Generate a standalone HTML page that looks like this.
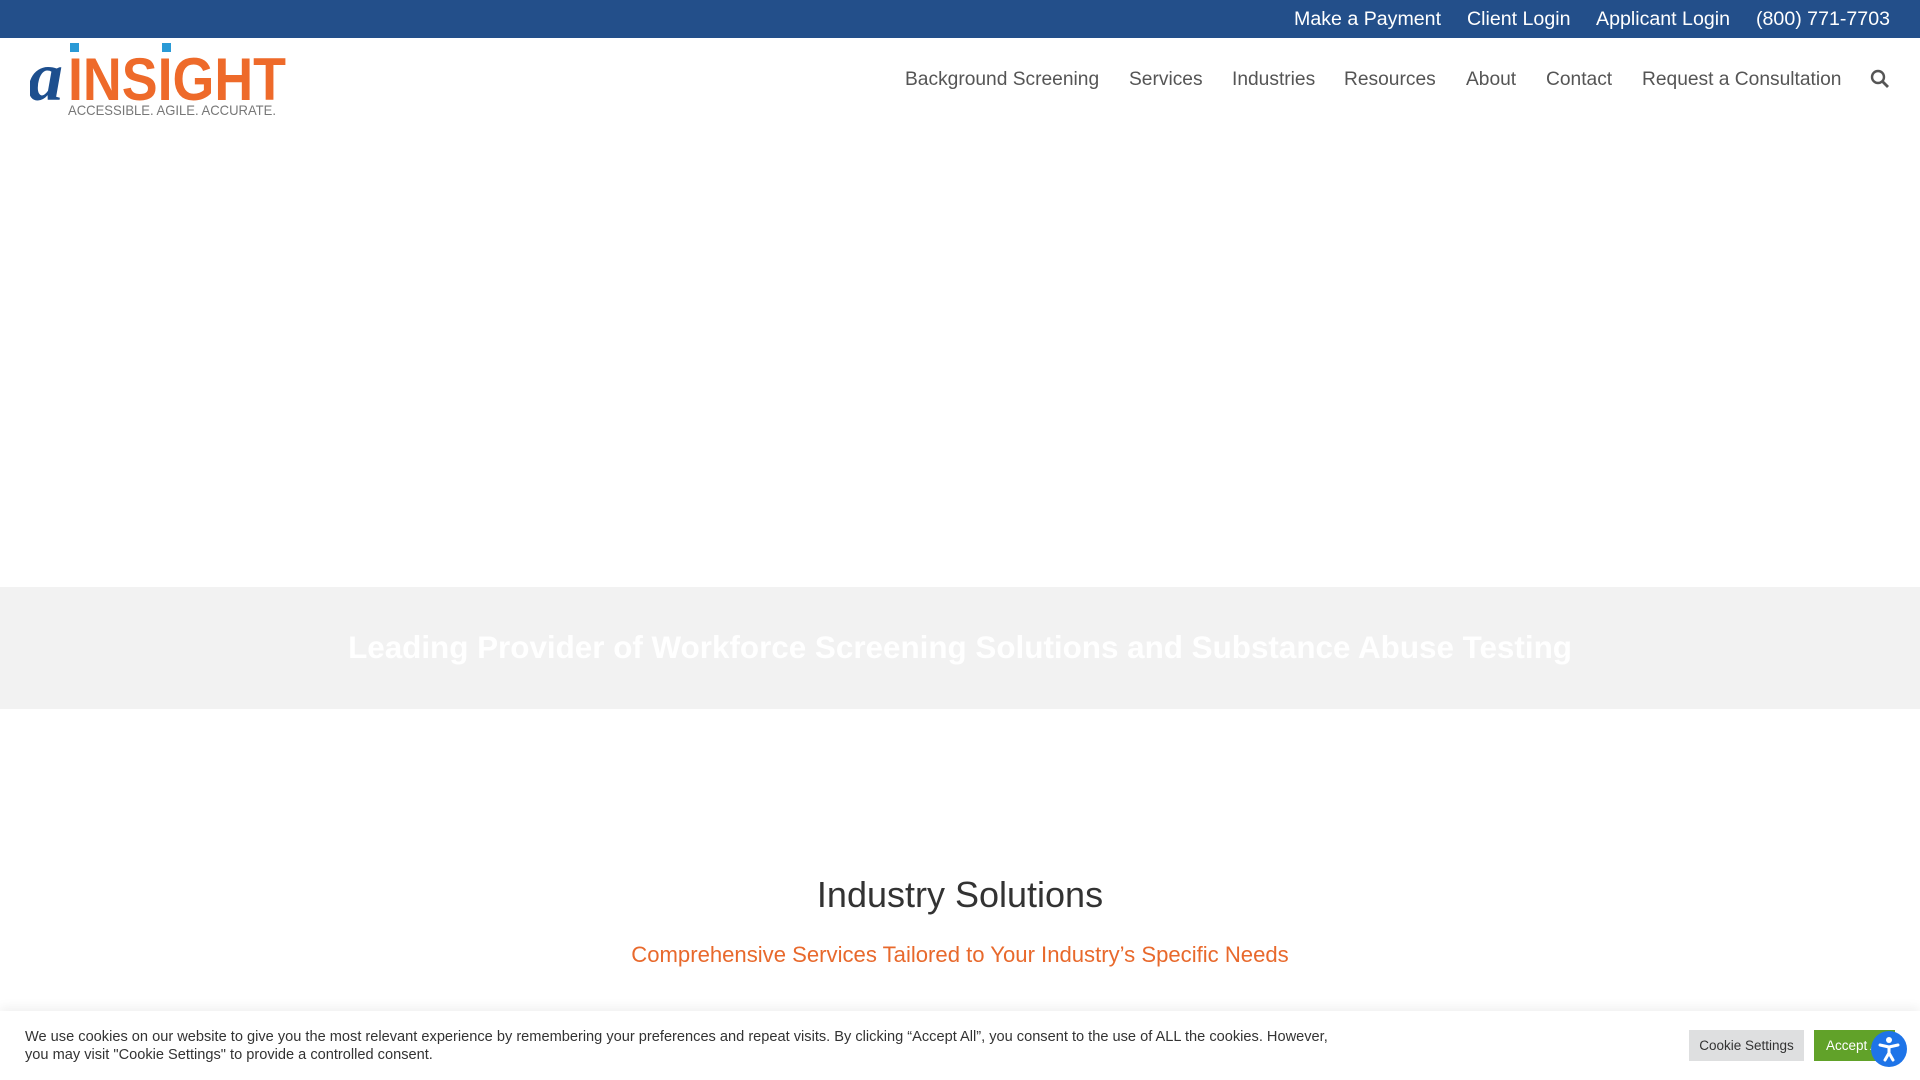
<!DOCTYPE html>
<html><head><meta charset="utf-8"><style>
*{margin:0;padding:0;box-sizing:border-box}
body{width:1920px;height:1080px;overflow:hidden;background:#fff;font-family:"Liberation Sans",Arial,sans-serif;position:relative}
.top{height:38px;background:#234f8a;position:relative}
.top span{position:absolute;top:8px;color:#fff;font-size:19.6px}
.logo{position:absolute;left:30px;top:42px}
.nav span{position:absolute;top:69px;font-size:19.2px;color:#555}
.band{position:absolute;top:587px;left:0;width:1920px;height:122px;background:#f2f2f2;text-align:center}
.band h1{color:#fff;font-size:31.4px;font-weight:bold;line-height:122px}
.h2{position:absolute;top:874px;width:100%;text-align:center;font-size:36px;color:#333}
.sub{position:absolute;top:942px;width:100%;text-align:center;font-size:22.1px;color:#e8692c}
.cookie{position:absolute;top:1011px;left:0;width:1920px;height:69px;background:#fff;box-shadow:0 -4px 10px rgba(0,0,0,.06)}
.cookie p{position:absolute;left:25px;top:17px;font-size:14.6px;line-height:18px;color:#333;width:1318px}
.btn{position:absolute;top:19px;height:31px;font-size:13.5px;line-height:31px;text-align:center}
</style></head><body>
<div class="top">
<span style="left:1294px">Make a Payment</span>
<span style="left:1467px">Client Login</span>
<span style="left:1596px">Applicant Login</span>
<span style="left:1756px">(800) 771-7703</span>
</div>
<svg class="logo" width="265" height="78" viewBox="0 0 265 78">
<text x="-2" y="58" font-family="Liberation Serif,serif" font-style="italic" font-weight="bold" font-size="70" fill="#1d4f8e">a</text>
<rect x="40" y="1" width="9" height="9" fill="#2a9ad6"/><rect x="132" y="1" width="9" height="9" fill="#2a9ad6"/>
<text x="38" y="58" font-family="Liberation Sans,sans-serif" font-weight="bold" font-size="60" fill="#ee6a2a" textLength="218" lengthAdjust="spacingAndGlyphs">INSIGHT</text>
<text x="38" y="73" font-family="Liberation Sans,sans-serif" font-size="14" fill="#777" textLength="208" lengthAdjust="spacingAndGlyphs">ACCESSIBLE. AGILE. ACCURATE.</text>
</svg>
<div class="nav">
<span style="left:905px">Background Screening</span>
<span style="left:1129px">Services</span>
<span style="left:1232px">Industries</span>
<span style="left:1344px">Resources</span>
<span style="left:1466px">About</span>
<span style="left:1546px">Contact</span>
<span style="left:1642px">Request a Consultation</span>
</div>
<svg style="position:absolute;left:1870px;top:69px" width="20" height="20" viewBox="0 0 20 20"><circle cx="8" cy="8" r="6" fill="none" stroke="#555" stroke-width="2.4"/><path d="M12.5 12.5L18 18" stroke="#555" stroke-width="2.8"/></svg>
<div class="band"><h1>Leading Provider of Workforce Screening Solutions and Substance Abuse Testing</h1></div>
<div class="h2">Industry Solutions</div>
<div class="sub">Comprehensive Services Tailored to Your Industry’s Specific Needs</div>
<div class="cookie">
<p>We use cookies on our website to give you the most relevant experience by remembering your preferences and repeat visits. By clicking “Accept All”, you consent to the use of ALL the cookies. However, you may visit "Cookie Settings" to provide a controlled consent.</p>
<div class="btn" style="left:1689px;width:115px;background:#dedfe0;color:#333">Cookie Settings</div>
<div class="btn" style="left:1814px;width:81px;background:#61a229;color:#fff;text-align:left;padding-left:12px">Accept All</div>
</div>
<svg style="position:absolute;left:1870px;top:1030px" width="38" height="38" viewBox="0 0 38 38"><circle cx="19" cy="19" r="18" fill="#1e74e8"/><circle cx="19" cy="10" r="3" fill="#fff"/><path d="M10 15L19 17L28 15M19 17V23L15 30M19 23L23 30" stroke="#fff" stroke-width="3" fill="none" stroke-linecap="round" stroke-linejoin="round"/></svg>
</body></html>
